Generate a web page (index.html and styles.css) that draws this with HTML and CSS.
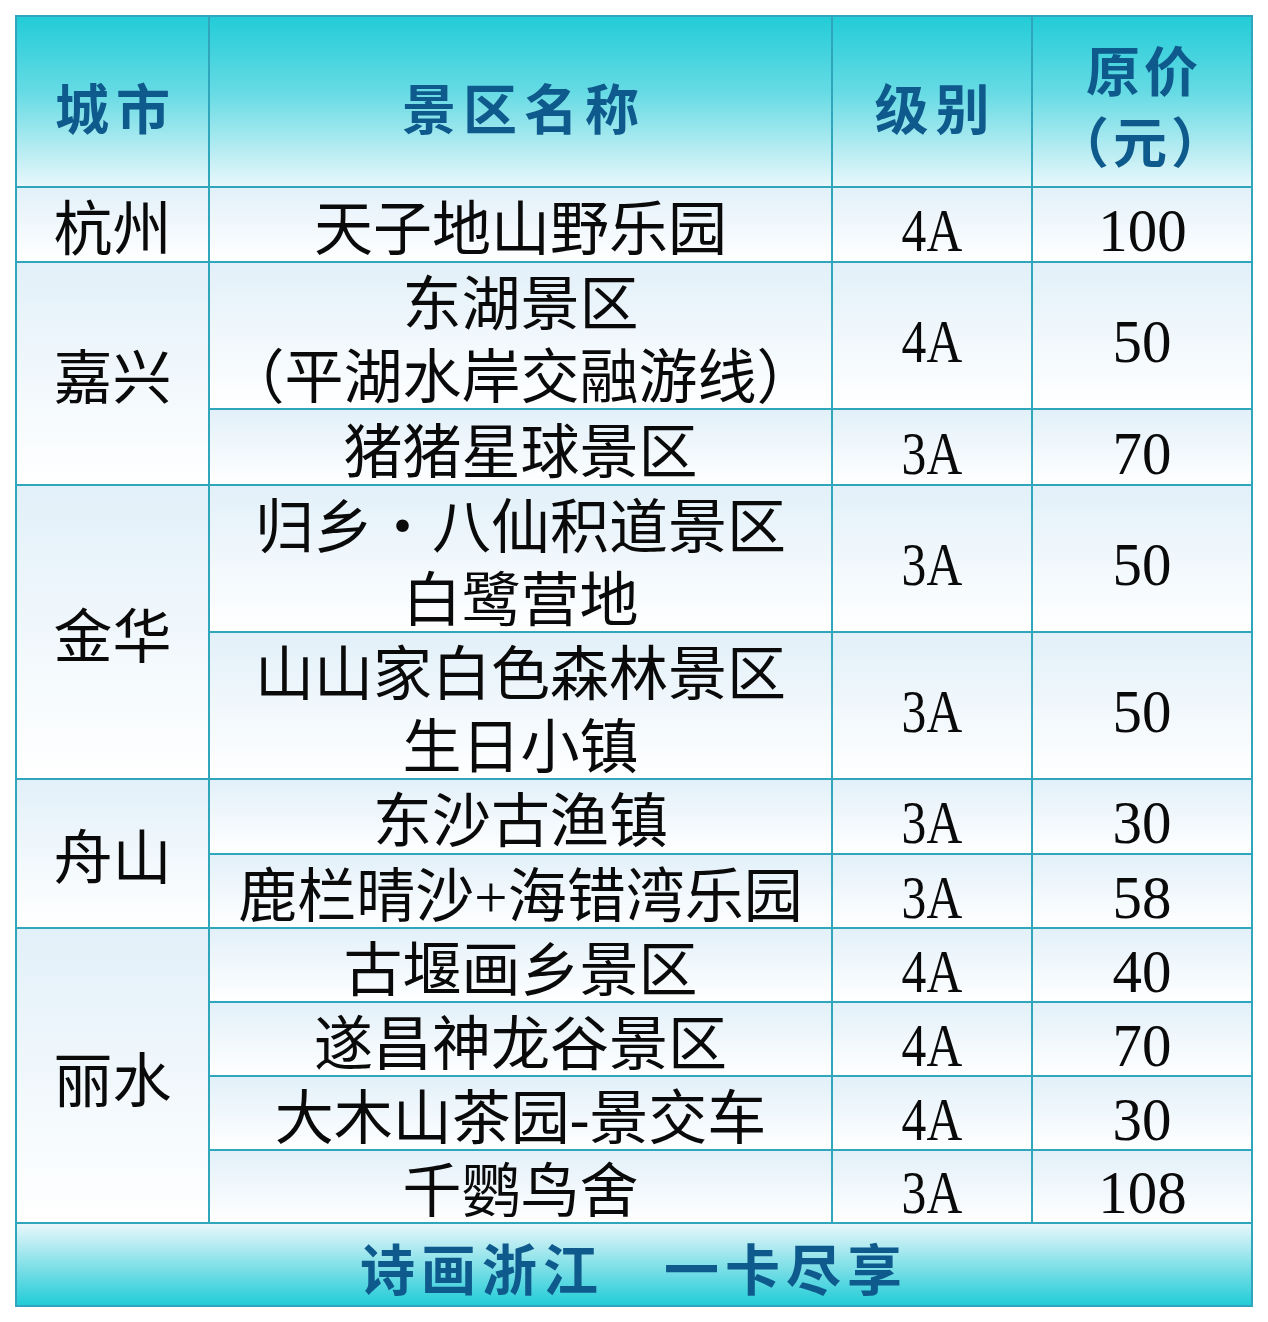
FILE: index.html
```html
<!DOCTYPE html>
<html lang="zh-CN">
<head>
<meta charset="utf-8">
<title>诗画浙江 一卡尽享</title>
<link rel="stylesheet" href="styles.css">
</head>
<body>
<table class="tbl">
  <colgroup>
    <col class="c-city">
    <col class="c-name">
    <col class="c-level">
    <col class="c-price">
  </colgroup>
  <thead>
    <tr class="r-head">
      <th>城市</th>
      <th>景区名称</th>
      <th>级别</th>
      <th class="two">原价<br>（元）</th>
    </tr>
  </thead>
  <tbody>
    <tr class="h75"><td>杭州</td><td>天子地山野乐园</td><td><span class="num lv">4A</span></td><td><span class="num">100</span></td></tr>
    <tr class="h147"><td rowspan="2">嘉兴</td><td><div class="ml">东湖景区<br>（平湖水岸交融游线）</div></td><td><span class="num lv">4A</span></td><td><span class="num">50</span></td></tr>
    <tr class="h76"><td>猪猪星球景区</td><td><span class="num lv">3A</span></td><td><span class="num">70</span></td></tr>
    <tr class="h147"><td rowspan="2">金华</td><td><div class="ml">归乡・八仙积道景区<br>白鹭营地</div></td><td><span class="num lv">3A</span></td><td><span class="num">50</span></td></tr>
    <tr class="h147"><td><div class="ml">山山家白色森林景区<br>生日小镇</div></td><td><span class="num lv">3A</span></td><td><span class="num">50</span></td></tr>
    <tr class="h75"><td rowspan="2">舟山</td><td>东沙古渔镇</td><td><span class="num lv">3A</span></td><td><span class="num">30</span></td></tr>
    <tr class="h74"><td>鹿栏晴沙+海错湾乐园</td><td><span class="num lv">3A</span></td><td><span class="num">58</span></td></tr>
    <tr class="h74"><td rowspan="4">丽水</td><td>古堰画乡景区</td><td><span class="num lv">4A</span></td><td><span class="num">40</span></td></tr>
    <tr class="h74"><td>遂昌神龙谷景区</td><td><span class="num lv">4A</span></td><td><span class="num">70</span></td></tr>
    <tr class="h74"><td>大木山茶园-景交车</td><td><span class="num lv">4A</span></td><td><span class="num">30</span></td></tr>
    <tr class="h73"><td>千鹦鸟舍</td><td><span class="num lv">3A</span></td><td><span class="num">108</span></td></tr>
  </tbody>
  <tfoot>
    <tr class="r-foot">
      <td colspan="4"><span class="slogan">诗画浙江</span><span class="slogan">一卡尽享</span></td>
    </tr>
  </tfoot>
</table>
</body>
</html>
```

FILE: styles.css
```css
html, body {
  margin: 0;
  padding: 0;
  background: #ffffff;
}

body {
  padding: 15px 0 0 15px;
}

.tbl {
  border-collapse: collapse;
  table-layout: fixed;
  width: 1236px;
  font-family: "Liberation Serif", "Noto Sans CJK SC", serif;
  color: #0a0a0a;
  text-spacing-trim: space-all;
}

.c-city { width: 193px; }
.c-name { width: 623px; }
.c-level { width: 200px; }
.c-price { width: 220px; }

.tbl th,
.tbl td {
  border: 2px solid #2fa6bb;
  padding: 0;
  text-align: center;
  vertical-align: middle;
}

/* header */
.tbl th {
  padding-top: 11px;
  font-family: "Noto Sans CJK SC", sans-serif;
  font-weight: 700;
  font-size: 54px;
  line-height: 70px;
  color: #0f5a8c;
  letter-spacing: 7px;
  text-indent: 7px;
  background: linear-gradient(to bottom, #22ccd8 0%, #67dbe4 45%, #e8f7fb 100%);
}

.tbl th.two {
  padding-top: 16px;
  padding-bottom: 11px;
  line-height: 71px;
  letter-spacing: 4px;
  text-indent: 4px;
}

/* body */
.tbl tbody td {
  padding-top: 12px;
  font-size: 59px;
  font-weight: 400;
  background: linear-gradient(to bottom, #e2f0f9 0%, #ffffff 100%);
}

.h76 td { line-height: 62px; }
.h75 td { line-height: 61px; }
.h74 td { line-height: 60px; }
.h73 td { line-height: 59px; }
.h147 td { line-height: 61px; }

.ml {
  line-height: 73px;
  margin-top: -6px;
  margin-bottom: -7px;
}

.num {
  display: inline-block;
  vertical-align: top;
  font-size: 62px;
  transform: scaleX(0.95);
}

.num.lv {
  transform: scaleX(0.8);
}

/* footer */
.tbl tfoot td {
  padding-top: 4px;
  font-family: "Noto Sans CJK SC", sans-serif;
  font-weight: 700;
  font-size: 55px;
  line-height: 77px;
  color: #0f5a8c;
  letter-spacing: 6px;
  background: linear-gradient(to bottom, #e8f7fb 0%, #8fe3ea 45%, #22ccd8 100%);
}

.slogan + .slogan {
  margin-left: 60px;
}
```
